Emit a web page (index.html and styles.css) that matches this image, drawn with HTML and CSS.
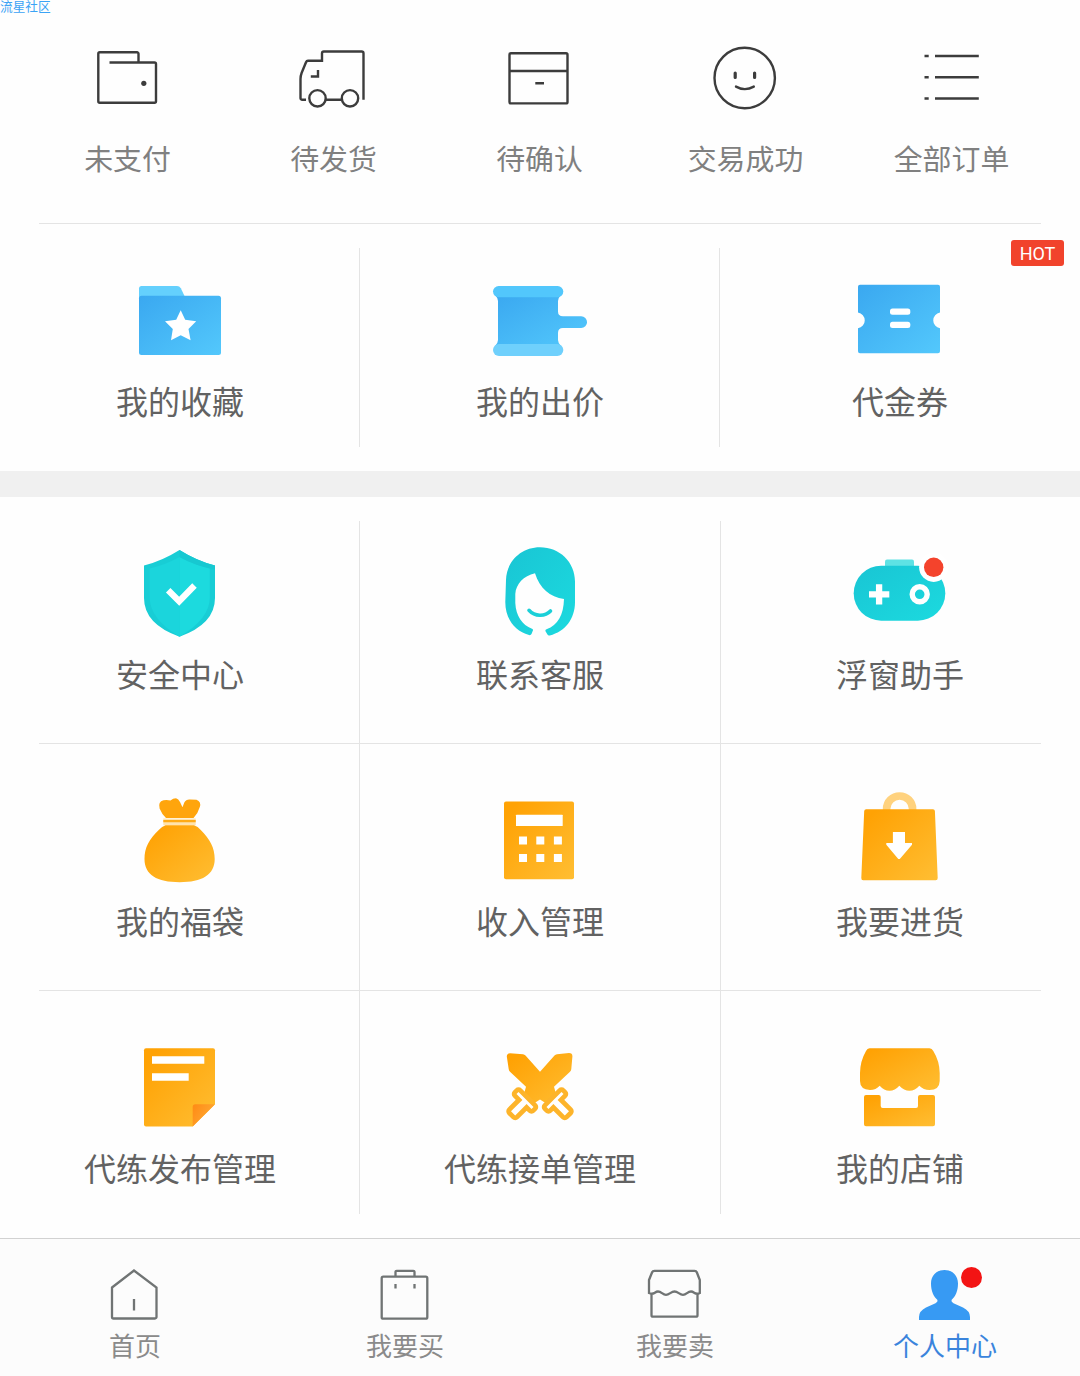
FILE: index.html
```html
<!DOCTYPE html>
<html lang="zh-CN">
<head>
    <meta charset="UTF-8">
    <meta name="viewport" content="width=device-width, initial-scale=1.0">
    <title>个人中心</title>
    <link rel="stylesheet" href="styles.css">
</head>
<body>

    <!-- Gradientes compartidos -->
    <svg class="defs" width="0" height="0">
        <defs>
            <linearGradient id="blue" x1="0" y1="0" x2="1" y2="1">
                <stop offset="0" stop-color="#3aa8f0"/>
                <stop offset="1" stop-color="#53c8fc"/>
            </linearGradient>
            <linearGradient id="teal" x1="0" y1="0" x2="1" y2="1">
                <stop offset="0" stop-color="#19c5d4"/>
                <stop offset="1" stop-color="#1cdadf"/>
            </linearGradient>
            <linearGradient id="orange" x1="0" y1="0" x2="1" y2="1">
                <stop offset="0.1" stop-color="#ffa204"/>
                <stop offset="1" stop-color="#ffbe33"/>
            </linearGradient>
            <linearGradient id="fold" x1="0" y1="0" x2="1" y2="0.6">
                <stop offset="0" stop-color="#ff8a14"/>
                <stop offset="1" stop-color="#ffab35"/>
            </linearGradient>
        </defs>
    </svg>

    <span class="watermark">流星社区</span>

    <div class="orders">
        <a class="order">
            <svg viewBox="0 0 80 80">
                <path d="M51.5 24.5V15.8a1.5 1.5 0 0 0-1.5-1.5H12.8a1.5 1.5 0 0 0-1.5 1.5V63.2a1.5 1.5 0 0 0 1.5 1.5H67.5a1.5 1.5 0 0 0 1.5-1.5V26a1.5 1.5 0 0 0-1.5-1.5H22.5"/>
                <circle class="dot" cx="56.8" cy="45.3" r="2.6"/>
            </svg>
            <span>未支付</span>
        </a>
        <a class="order">
            <svg viewBox="0 0 80 80">
                <path d="M13 61.8H9.2A1.7 1.7 0 0 1 7.5 60V41Q7.5 38 8.6 35L13 24.2Q13.6 22.8 15 22.8H29V15.2A1.8 1.8 0 0 1 30.8 13.5H68.7A1.8 1.8 0 0 1 70.5 15.2V61.8"/>
                <path d="M17.8 38.5H25V32M33 61.8H48.5"/>
                <circle cx="24.5" cy="60.3" r="8.2"/>
                <circle cx="57" cy="60.3" r="8.2"/>
            </svg>
            <span>待发货</span>
        </a>
        <a class="order">
            <svg viewBox="0 0 80 80">
                <rect x="10.5" y="15.2" width="58" height="50.2" rx="1.5"/>
                <path d="M10.5 33H68.5M36.3 45.2H45"/>
            </svg>
            <span>待确认</span>
        </a>
        <a class="order">
            <svg viewBox="0 0 80 80">
                <circle cx="39.7" cy="40" r="30.2"/>
                <path class="eyes" d="M30.2 35V39.5M49.6 35V39.5"/>
                <path d="M31 48.6Q39.8 53.6 48.8 48.6" stroke-linecap="round"/>
            </svg>
            <span>交易成功</span>
        </a>
        <a class="order">
            <svg viewBox="0 0 80 80">
                <path d="M13.5 18H17.7M24 18H67.8M13.5 39.3H17.7M24 39.3H67.8M13.5 60.5H17.7M24 60.5H67.8"/>
            </svg>
            <span>全部订单</span>
        </a>
    </div>

    <div class="menu">
        <a class="item">
            <svg viewBox="0 0 100 100">
                <path fill="#64d0fd" d="M9 30V18.500a2.500 2.500 0 0 1 2.500-2.500H47Q49.500 16 50.800 18.300L55 27V30z"/>
                <rect x="9" y="25.700" width="82" height="59.300" rx="2.500" fill="url(#blue)"/>
                <path fill="#fff" d="M50.700 40.300L55.200 49.800L66.200 51.200L58.500 59L60.600 70.200L50.700 65.300L41 70.200L42.800 59L35 51.200L46.200 49.800z"/>
            </svg>
            <span>我的收藏</span>
        </a>
        <a class="item">
            <svg viewBox="0 0 100 100">
                <path fill="url(#blue)" d="M5 25Q8 28 8 31V70Q8 73 5 76H71Q68 73 68 70V63Q68 58 73 58H91.200a5.800 5.800 0 0 0 0-11.700H73Q68 46.300 68 41.500V31Q68 28 71 25z"/>
                <rect x="3" y="16" width="70.300" height="11.200" rx="5.600" fill="#52c7fc"/>
                <rect x="3" y="74" width="70.300" height="12" rx="6" fill="#6fd0fc"/>
            </svg>
            <span>我的出价</span>
        </a>
        <a class="item">
            <svg viewBox="0 0 100 100">
                <path fill="url(#blue)" d="M10 14.700H88a2 2 0 0 1 2 2V42.500a8 8 0 0 0 0 15.800V81.300a2 2 0 0 1-2 2H10a2 2 0 0 1-2-2V58.300a8 8 0 0 0 0-15.800V16.700a2 2 0 0 1 2-2z"/>
                <rect x="40" y="38.500" width="20.300" height="6.300" rx="2.500" fill="#fff"/>
                <rect x="40" y="51.700" width="20.300" height="6.300" rx="2.500" fill="#fff"/>
            </svg>
            <span>代金券</span>
            <em class="hot">HOT</em>
        </a>
    </div>

    <div class="gap"></div>

    <div class="menu menu-rows">
        <a class="item">
            <svg viewBox="0 0 100 100">
                <path fill="#18cdd5" d="M49.500 7Q67 18 85 22.500V55Q85 81 49.500 93.700Q14 81 14 55V22.500Q32 18 49.500 7z"/>
                <path fill="#1bd5dc" d="M49.500 14Q35 22 19.700 25.500V55Q20 76 49.500 93.700z"/>
                <path fill="#1cdade" d="M49.500 14Q64 22 79.800 25.500V55Q79.500 76 49.500 93.700z"/>
                <path fill="#17c8d1" d="M49.500 7Q67 18 85 22.500V26.500Q66 23 49.500 14z"/>
                <path fill="none" stroke="#fff" stroke-width="6.300" d="M38.200 47.200L49.200 58.300L64.500 42.500"/>
            </svg>
            <span>安全中心</span>
        </a>
        <a class="item">
            <svg viewBox="0 0 100 100">
                <path fill="url(#teal)" d="M50 4.300C69.500 4.300 85 19 85 38.500V59C85 76 75 88.500 59.800 92.500Q58 93 57.300 91.300L55.500 88.200Q55 86.800 56.500 86.300C68 82 73.500 72 74 56C60 54.500 49.500 45 45 30.300C33.500 33 26 41 25.300 51V60C26 73 32 82 42 85.700Q43.500 86.300 42.800 87.700L41.500 91Q40.700 92.500 39 92C25 88 15.300 76 15.300 59L16 37C16.500 18.500 31 4.300 50 4.300z"/>
                <path fill="none" stroke="#1bd0d8" stroke-width="3.600" stroke-linecap="round" d="M39 67.300Q43.500 72.300 50 72.200Q56.500 72.300 60.500 68"/>
            </svg>
            <span>联系客服</span>
        </a>
        <a class="item">
            <svg viewBox="0 0 100 100">
                <path fill="#5ee2e4" d="M35 24V18.500a2 2 0 0 1 2-2H62a2 2 0 0 1 2 2V24z"/>
                <rect x="3.700" y="22.700" width="91.600" height="55" rx="27.500" fill="url(#teal)"/>
                <path fill="none" stroke="#fff" stroke-width="6.300" d="M19 51.300H39.300M29.100 41.200V61.500"/>
                <circle cx="69.700" cy="51.300" r="7.500" fill="none" stroke="#fff" stroke-width="5.400"/>
                <circle cx="83.700" cy="24.300" r="14.600" fill="#fff"/>
                <circle cx="83.700" cy="24.300" r="9.700" fill="#f4432c"/>
            </svg>
            <span>浮窗助手</span>
        </a>
        <a class="item">
            <svg viewBox="0 0 100 100">
                <path fill="#ffa50c" d="M36 28Q32 24.500 29.600 18.500Q27.800 11.500 33.500 10.300Q37 9.500 40.500 10.600Q43 8.300 46 8.300Q48.500 9 50 12L52.500 17.300L54.300 12.500Q56 9.300 60 9.600L66.500 9.700Q71.500 11.500 69.800 17Q68 23.500 63.500 28z"/>
                <path fill="#ffe3ad" d="M33.300 28.500H65.700V35.300H33.300z"/>
                <path fill="#ffab16" d="M33.300 29.900H65.700V32.200H33.300z"/>
                <path fill="url(#orange)" d="M35.500 35.300H64Q68 36.300 70.500 39.800C80 49 84.700 58 84.700 69C84.700 85 72 92.200 49.700 92.200C27 92.200 14.500 85 14.500 69C14.500 58 19 49 29 39.800Q32 36.300 35.500 35.300z"/>
            </svg>
            <span>我的福袋</span>
        </a>
        <a class="item">
            <svg viewBox="0 0 100 100">
                <rect x="14" y="11.500" width="70" height="77.700" rx="2" fill="url(#orange)"/>
                <rect x="26" y="24.700" width="46.700" height="11.200" rx="0.500" fill="#fff"/>
                <path fill="#fff" d="M29 46.500h8v8h-8zM46.300 46.500h8v8h-8zM63.900 46.500h8v8h-8zM29 64h8v8h-8zM46.300 64h8v8h-8zM63.900 64h8v8h-8z"/>
            </svg>
            <span>收入管理</span>
        </a>
        <a class="item">
            <svg viewBox="0 0 100 100">
                <path fill="none" stroke="#ffd27e" stroke-width="7.600" d="M36.600 20V19a13 13 0 0 1 26 0V20"/>
                <path fill="url(#orange)" d="M16.200 19.200H83Q84.700 19.200 84.900 21L87.700 88Q87.700 90.200 85.700 90.200H13.200Q11.200 90.200 11.300 88L14.200 21Q14.400 19.200 16.200 19.200z"/>
                <path fill="#fff" d="M42.900 42H55V53H62V54.700L49.800 69H48.300L36.300 54.700V53H42.900z"/>
            </svg>
            <span>我要进货</span>
        </a>
        <a class="item">
            <svg viewBox="0 0 100 100">
                <path fill="url(#orange)" d="M16 11.200H83a2 2 0 0 1 2 2V67.300L62.700 89.500H16a2 2 0 0 1-2-2V13.200a2 2 0 0 1 2-2z"/>
                <path fill="url(#fold)" d="M62.700 89.500V70Q62.700 67.300 65.400 67.300H85z"/>
                <path fill="#fff" d="M22 19.300H74.300V26.800H22zM22 36.200H58.700V43.700H22z"/>
            </svg>
            <span>代练发布管理</span>
        </a>
        <a class="item">
            <svg viewBox="0 0 100 100">
                <path fill="url(#orange)" d="M20 16.200L33 17.200Q34.500 17.400 35.500 18.500L50 34.700L64.500 18.500Q65.500 17.400 67 17.200L79 16Q82.500 16 82.400 19.500L81.300 32Q81.200 33.500 80 34.700L64 49.700L66 57L57 67L50 62.500L43 67L34 57L36 49.700L20 34.700Q18.800 33.500 18.700 32L16.800 19.500Q16.800 16.500 20 16.200z"/>
                <path class="hilt" d="M26.500 57L28.500 55L43.500 70L41.500 72L36.600 67.100L25.200 78.500L21 74.300L32.400 62.900z"/>
                <path class="hilt" d="M73.500 57L71.500 55L56.500 70L58.500 72L63.400 67.100L74.800 78.500L79 74.300L67.600 62.900z"/>
            </svg>
            <span>代练接单管理</span>
        </a>
        <a class="item">
            <svg viewBox="0 0 100 100">
                <path fill="url(#orange)" d="M19.500 11.300H79.500Q82 11.300 83.300 14Q89.500 24 89.700 36V44Q89.500 53 79.500 53Q73.500 53 69.300 48.800Q65 53.800 59.500 53.800Q54 53.800 49.300 48.800Q45 53.800 39.500 53.800Q34 53.800 29.700 48.800Q26 53 20 53Q10 52.500 10 44V36Q10.200 24 16 14Q17.300 11.300 19.500 11.300z"/>
                <path fill="url(#orange)" d="M15.800 58H28.700a2 2 0 0 1 2 2V69a2 2 0 0 0 2 2H66a2 2 0 0 0 2-2V60a2 2 0 0 1 2-2H83a2 2 0 0 1 2 2V87.300a2 2 0 0 1-2 2H16a2 2 0 0 1-2-2V60a2 2 0 0 1 2-2z"/>
            </svg>
            <span>我的店铺</span>
        </a>
    </div>

    <div class="tabbar">
        <a class="tab">
            <svg viewBox="0 0 60 60">
                <path d="M7 22.500L29 5.500L51.500 22.500V52a1.500 1.500 0 0 1-1.500 1.500H8.500A1.500 1.500 0 0 1 7 52zM29 34V45.500"/>
            </svg>
            <span>首页</span>
        </a>
        <a class="tab">
            <svg viewBox="0 0 60 60">
                <rect x="6.700" y="11.700" width="45.600" height="42" rx="1.500"/>
                <path d="M20.500 11.500V7a1.200 1.200 0 0 1 1.200-1.200H38.300A1.200 1.200 0 0 1 39.500 7V11.500M20.500 19V23.500M39.500 19V23.500"/>
            </svg>
            <span>我要买</span>
        </a>
        <a class="tab">
            <svg viewBox="0 0 60 60">
                <path d="M9.500 5.900H49.500Q51.300 5.900 51.900 7.500L54.800 15V28C50 30.500 49.500 26.500 46 26.500C42.500 26.500 41.500 29.800 38 29.800C34.500 29.800 33 26.500 29.500 26.500C26 26.500 24.500 29.800 21 29.800C17.500 29.800 16.500 26.500 13 26.500C9.500 26.500 9 30.500 4 28V15L7 7.500Q7.700 5.900 9.500 5.900z"/>
                <path d="M6.500 28.500V50.200a1.500 1.500 0 0 0 1.500 1.500H51a1.500 1.500 0 0 0 1.500-1.500V28.500"/>
            </svg>
            <span>我要卖</span>
        </a>
        <a class="tab active">
            <svg viewBox="0 0 60 60">
                <path d="M29.500 5C38 5 43 11 43 18.500C43 26 40.500 31.500 36.500 35Q36 37 38.500 38.200L48 42.500Q55 46 55 52V55H4V52Q4 46 11 42.500L20.500 38.200Q23 37 22.500 35C18.500 31.500 16 26 16 18.500C16 11 21 5 29.500 5z"/>
            </svg>
            <span>个人中心</span>
            <i class="badge"></i>
        </a>
    </div>

</body>
</html>
```

FILE: styles.css
```css
body {
    font-family: "Noto Sans CJK SC", sans-serif;
    margin: 0;
    background-color: #fefefe;
}

svg {
    display: block;
}

.defs {
    position: absolute;
}

.watermark {
    position: absolute;
    top: -3px;
    left: 0;
    font-size: 12.7px;
    line-height: 18px;
    color: #3ba3f5;
}

/* Pedidos */
.orders {
    display: grid;
    grid-template-columns: repeat(5, 206px);
    justify-content: center;
    box-sizing: border-box;
    height: 223px;
    padding-top: 38px;
    margin-right: 1px;
}

.order {
    display: flex;
    flex-direction: column;
    align-items: center;
    gap: 19px;
    font-size: 28.9px;
    line-height: 40px;
    color: #808080;
}

.order svg {
    width: 80px;
    height: 80px;
    margin-left: -1px;
    fill: none;
    stroke: #3c3c3c;
    stroke-width: 2.4;
}

.order .dot {
    fill: #3c3c3c;
    stroke: none;
}

.order .eyes {
    stroke-width: 3.2;
    stroke-linecap: round;
}

/* Cuadrícula de opciones */
.menu {
    position: relative;
    display: grid;
    grid-template-columns: repeat(3, 360px);
    grid-auto-rows: 247px;
    background:
        linear-gradient(#e4e4e4, #e4e4e4) 39px 0 / 1002px 1px no-repeat,
        linear-gradient(#e4e4e4, #e4e4e4) 359px 25px / 1px 199px no-repeat,
        linear-gradient(#e4e4e4, #e4e4e4) 719px 25px / 1px 199px no-repeat;
    padding-top: 1px;
}

.menu-rows {
    background:
        linear-gradient(#e4e4e4, #e4e4e4) 39px 246px / 1002px 1px no-repeat,
        linear-gradient(#e4e4e4, #e4e4e4) 39px 493px / 1002px 1px no-repeat,
        linear-gradient(#e4e4e4, #e4e4e4) 359px 24px / 1px 693px no-repeat,
        linear-gradient(#e4e4e4, #e4e4e4) 720px 24px / 1px 693px no-repeat;
    padding-top: 0;
}

.item {
    position: relative;
    display: flex;
    flex-direction: column;
    align-items: center;
    gap: 7px;
    padding-top: 46px;
    font-size: 32px;
    line-height: 46px;
    color: #626262;
}

.item svg {
    width: 100px;
    height: 100px;
}

.hilt {
    fill: #fff;
    stroke: #fdb42a;
    stroke-width: 9.5;
    stroke-linejoin: round;
    paint-order: stroke;
}

.hot {
    position: absolute;
    top: 16px;
    right: 16px;
    width: 53px;
    height: 26px;
    border-radius: 3px;
    background-color: #f1432c;
    color: #fff;
    font-family: Roboto, sans-serif;
    font-size: 18px;
    font-style: normal;
    line-height: 27px;
    text-align: center;
}

.gap {
    height: 26px;
    background-color: #f0f0f0;
}

/* Barra inferior */
.tabbar {
    display: grid;
    grid-template-columns: repeat(4, 270px);
    box-sizing: border-box;
    height: 138px;
    padding-top: 26px;
    border-top: 1px solid #d2d2d2;
    background-color: #fcfcfc;
}

.tab {
    position: relative;
    display: flex;
    flex-direction: column;
    align-items: center;
    font-size: 26px;
    line-height: 40px;
    color: #8a8a8a;
}

.tab svg {
    width: 60px;
    height: 60px;
    fill: none;
    stroke: #707474;
    stroke-width: 2.3;
}

.tab.active {
    color: #3a84dc;
}

.tab.active svg {
    fill: #379af3;
    stroke: none;
}

.badge {
    position: absolute;
    top: 2px;
    right: 98px;
    width: 21px;
    height: 21px;
    border-radius: 50%;
    background-color: #f31414;
}
```
